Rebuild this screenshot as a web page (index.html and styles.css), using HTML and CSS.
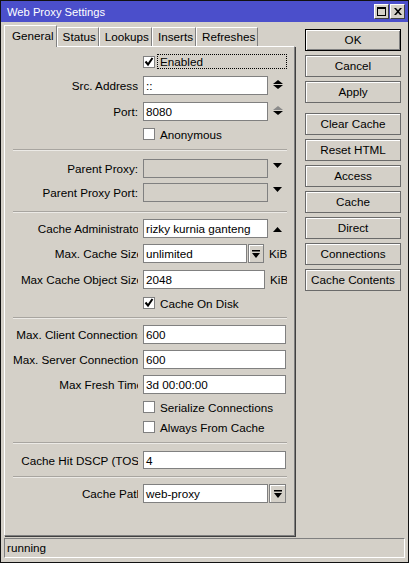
FILE: index.html
```html
<!DOCTYPE html>
<html>
<head>
<meta charset="utf-8">
<title>Web Proxy Settings</title>
<link rel="stylesheet" href="styles.css">
</head>
<body>
<div class="window">
  <div class="titlebar">
    <span class="title">Web Proxy Settings</span>
    <div class="tbtns">
      <span class="tbtn"><svg width="9" height="9" viewBox="0 0 9 9"><rect x="0.5" y="0.5" width="8" height="8" fill="none" stroke="#000"/><rect x="0" y="0" width="9" height="2" fill="#000"/></svg></span>
      <span class="tbtn"><svg width="8" height="7" viewBox="0 0 8 7"><path d="M0 0h2l2 2.2L6 0h2L5 3.5L8 7H6L4 4.8L2 7H0l3-3.5z" fill="#000"/></svg></span>
    </div>
  </div>
  <div class="main">
    <div class="left">
      <div class="tabs">
        <span class="tab active">General</span>
        <span class="tab">Status</span>
        <span class="tab">Lookups</span>
        <span class="tab">Inserts</span>
        <span class="tab">Refreshes</span>
      </div>
      <div class="panel">
        <div class="form">
          <div class="cbrow first">
            <span class="cb"><svg width="10" height="10" viewBox="0 0 10 10"><path d="M1.5 4.5L4 7.5L8.5 1" fill="none" stroke="#000" stroke-width="2"/></svg></span>
            <span class="focus">Enabled</span>
          </div>
          <div class="row">
            <span class="lab"><span>Src. Address</span></span>
            <span class="inp">::</span>
            <span class="spin">
              <svg width="10" height="4" viewBox="0 0 10 4"><path d="M0 4L5 0L10 4Z" fill="#000"/></svg>
              <svg width="10" height="4" viewBox="0 0 10 4"><path d="M0 0L5 4L10 0Z" fill="#000"/></svg>
            </span>
          </div>
          <div class="row mt7">
            <span class="lab"><span>Port:</span></span>
            <span class="inp">8080</span>
            <span class="spin">
              <svg width="10" height="4" viewBox="0 0 10 4"><path d="M0 4L5 0L10 4Z" fill="#8a8a8a"/></svg>
              <svg width="10" height="4" viewBox="0 0 10 4"><path d="M0 0L5 4L10 0Z" fill="#000"/></svg>
            </span>
          </div>
          <div class="cbrow">
            <span class="cb"></span>
            <span class="cbtext">Anonymous</span>
          </div>
          <div class="sep s1"></div>
          <div class="row mt8">
            <span class="lab"><span>Parent Proxy:</span></span>
            <span class="inp dis"></span>
            <span class="drop"><svg width="9" height="5" viewBox="0 0 9 5"><path d="M0 0L4.5 5L9 0Z" fill="#000"/></svg></span>
          </div>
          <div class="row mt5">
            <span class="lab"><span>Parent Proxy Port:</span></span>
            <span class="inp dis"></span>
            <span class="drop"><svg width="9" height="5" viewBox="0 0 9 5"><path d="M0 0L4.5 5L9 0Z" fill="#000"/></svg></span>
          </div>
          <div class="sep s2"></div>
          <div class="row">
            <span class="lab cut"><span>Cache Administrator</span></span>
            <span class="inp">rizky kurnia ganteng</span>
            <span class="drop up"><svg width="9" height="5" viewBox="0 0 9 5"><path d="M0 5L4.5 0L9 5Z" fill="#000"/></svg></span>
          </div>
          <div class="row">
            <span class="lab cut"><span>Max. Cache Size</span></span>
            <span class="inp short">unlimited</span>
            <span class="ddbtn"><svg width="8" height="8" viewBox="0 0 8 8"><rect x="0" y="0" width="8" height="1.5" fill="#000"/><path d="M0 3H8L4 8Z" fill="#000"/></svg></span>
            <span class="unit">KiB</span>
          </div>
          <div class="row mt7">
            <span class="lab cut"><span>Max Cache Object Size</span></span>
            <span class="inp mid">2048</span>
            <span class="unit u2">KiB</span>
          </div>
          <div class="cbrow mt6">
            <span class="cb"><svg width="10" height="10" viewBox="0 0 10 10"><path d="M1.5 4.5L4 7.5L8.5 1" fill="none" stroke="#000" stroke-width="2"/></svg></span>
            <span class="cbtext">Cache On Disk</span>
          </div>
          <div class="sep s3"></div>
          <div class="row">
            <span class="lab cut"><span>Max. Client Connections</span></span>
            <span class="inp full">600</span>
          </div>
          <div class="row">
            <span class="lab cut"><span>Max. Server Connections</span></span>
            <span class="inp full">600</span>
          </div>
          <div class="row">
            <span class="lab cut"><span>Max Fresh Time</span></span>
            <span class="inp full">3d 00:00:00</span>
          </div>
          <div class="cbrow">
            <span class="cb"></span>
            <span class="cbtext">Serialize Connections</span>
          </div>
          <div class="cbrow mt4">
            <span class="cb"></span>
            <span class="cbtext">Always From Cache</span>
          </div>
          <div class="sep s4"></div>
          <div class="row mt7 h18">
            <span class="lab cut"><span>Cache Hit DSCP (TOS)</span></span>
            <span class="inp full">4</span>
          </div>
          <div class="sep s5"></div>
          <div class="row">
            <span class="lab cut"><span>Cache Path</span></span>
            <span class="inp">web-proxy</span>
            <span class="ddbtn path"><svg width="8" height="8" viewBox="0 0 8 8"><rect x="0" y="0" width="8" height="1.5" fill="#000"/><path d="M0 3H8L4 8Z" fill="#000"/></svg></span>
          </div>
        </div>
      </div>
    </div>
    <div class="buttons">
      <span class="btn default">OK</span>
      <span class="btn">Cancel</span>
      <span class="btn">Apply</span>
      <span class="btn gapbig">Clear Cache</span>
      <span class="btn">Reset HTML</span>
      <span class="btn">Access</span>
      <span class="btn">Cache</span>
      <span class="btn">Direct</span>
      <span class="btn">Connections</span>
      <span class="btn">Cache Contents</span>
    </div>
  </div>
  <div class="status">running</div>
</div>
</body>
</html>
```
FILE: styles.css
```css
* { box-sizing: border-box; }
body {
  margin: 0;
  font-family: "Liberation Sans", Arial, sans-serif;
  font-size: 11.7px;
  color: #000;
  background: #fff;
}
.window {
  width: 409px;
  height: 563px;
  border: 1px solid #111;
  background: #d4d0c8;
  display: flex;
  flex-direction: column;
}
.titlebar {
  height: 21px;
  flex: none;
  background: #4b4fcb;
  display: flex;
  align-items: center;
  justify-content: space-between;
  padding: 0 3px 0 6px;
}
.title {
  color: #fff;
  font-size: 11.2px;
}
.tbtns {
  display: flex;
  gap: 1px;
}
.tbtn {
  width: 15px;
  height: 15px;
  background: #d4d0c8;
  border: 1px solid;
  border-color: #fff #404040 #404040 #fff;
  display: flex;
  align-items: center;
  justify-content: center;
}
.main {
  flex: 1;
  display: flex;
  gap: 10px;
  padding: 3px 6px 0 3px;
  min-height: 0;
}
.left {
  width: 291px;
  display: flex;
  flex-direction: column;
}
.tabs {
  height: 21px;
  display: flex;
  align-items: flex-end;
  position: relative;
  z-index: 1;
  flex: none;
}
.tab {
  height: 19px;
  padding: 0 2px 0 5px;
  border: 1px solid;
  border-color: #fff #808080 transparent #fff;
  border-bottom: none;
  line-height: 18px;
  background: #d4d0c8;
  white-space: nowrap;
}
.tab.active {
  height: 22px;
  margin-bottom: -1px;
  line-height: 19px;
  padding: 0 2px 0 7px;
}
.panel {
  flex: 1;
  border: 1px solid;
  border-color: #fff #808080 #808080 #fff;
  box-shadow: 1px 1px 0 #404040;
}
.form {
  margin: 0 7px 0 8px;
  overflow: hidden;
}
.row {
  display: flex;
  align-items: stretch;
  height: 19px;
  margin-top: 6px;
}
.row.h18 { height: 18px; }
.row.mt5, .cbrow.mt5 { margin-top: 5px; }
.row.mt6, .cbrow.mt6 { margin-top: 6px; }
.row.mt7, .cbrow.mt7 { margin-top: 7px; }
.row.mt8 { margin-top: 8px; }
.cbrow.mt4 { margin-top: 4px; }
.lab {
  width: 125px;
  flex: none;
  margin-right: 5px;
  overflow: hidden;
  white-space: nowrap;
  line-height: 19px;
}
.lab > span {
  display: block;
  width: 125px;
  text-align: right;
}
.lab.cut > span {
  width: 130px;
}
.inp {
  width: 125px;
  flex: none;
  background: #fff;
  border: 1px solid #808080;
  padding-left: 2px;
  line-height: 17px;
  white-space: nowrap;
  overflow: hidden;
}
.inp.dis { background: #d4d0c8; }
.inp.full { width: 143px; }
.inp.short { width: 104px; }
.inp.mid { width: 122px; }
.spin {
  width: 19px;
  flex: none;
  display: flex;
  flex-direction: column;
  align-items: center;
  padding-top: 4px;
  gap: 1px;
}
.spin svg { display: block; }
.drop {
  width: 19px;
  flex: none;
  display: flex;
  justify-content: center;
  align-items: flex-start;
  padding-top: 4px;
}
.drop.up { padding-top: 8px; }
.drop svg { display: block; }
.ddbtn {
  width: 16px;
  flex: none;
  margin-left: 1px;
  border: 1px solid #808080;
  box-shadow: inset 1px 1px 0 #fff;
  display: flex;
  align-items: center;
  justify-content: center;
}
.ddbtn.path { width: 17px; margin-left: 1px; }
.unit {
  margin-left: 5px;
  line-height: 19px;
  white-space: nowrap;
}
.unit.u2 { margin-left: 5px; }
.cbrow {
  display: flex;
  align-items: center;
  height: 16px;
  margin-top: 5px;
  padding-left: 130px;
  white-space: nowrap;
}
.cbrow.first {
  height: 17px;
  margin-top: 6px;
}
.cb {
  width: 12px;
  height: 12px;
  flex: none;
  background: #fff;
  border: 1px solid #808080;
  display: flex;
  align-items: center;
  justify-content: center;
}
.cb svg { display: block; }
.cbtext { margin-left: 5px; }
.focus {
  margin-left: 2px;
  width: 130px;
  height: 15px;
  border: 1px dotted #000;
  padding-left: 2px;
  line-height: 13px;
}
.sep {
  height: 2px;
  border-top: 1px solid #a8a5a0;
  border-bottom: 1px solid #eceae6;
}
.s1 { margin-top: 7px; }
.s2 { margin-top: 9px; }
.s3 { margin-top: 6px; }
.s4 { margin-top: 7px; }
.s5 { margin-top: 7px; }
.buttons {
  width: 96px;
  flex: none;
  display: flex;
  flex-direction: column;
  gap: 4px;
  padding-top: 4px;
}
.btn {
  height: 22px;
  border: 1px solid #6a6a6a;
  box-shadow: inset 1px 1px 0 #fff;
  text-align: center;
  line-height: 20px;
  white-space: nowrap;
}
.btn.default {
  border-color: #000;
  box-shadow: inset 1px 1px 0 #fff, inset -1px -1px 0 #808080;
}
.btn.gapbig { margin-top: 6px; }
.status {
  height: 20px;
  flex: none;
  margin: 2px 3px 4px 3px;
  border: 1px solid;
  border-color: #808080 #fff #fff #808080;
  padding-left: 2px;
  line-height: 18px;
}
```
